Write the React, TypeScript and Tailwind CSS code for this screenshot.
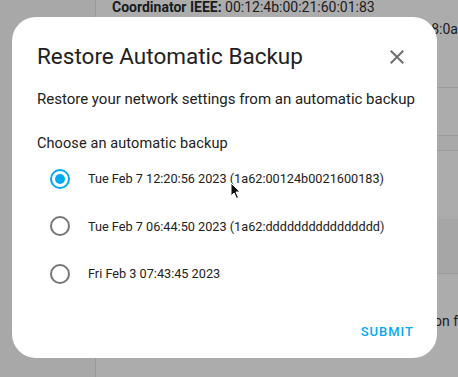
const backups = [
  { label: "Tue Feb 7 12:20:56 2023 (1a62:00124b0021600183)", checked: true },
  { label: "Tue Feb 7 06:44:50 2023 (1a62:dddddddddddddddd)", checked: false },
  { label: "Fri Feb 3 07:43:45 2023", checked: false },
];

function Radio({ checked }: { checked: boolean }) {
  return (
    <span
      className={`flex h-5 w-5 shrink-0 items-center justify-center rounded-full border-2 ${
        checked ? "border-[#03a9f4]" : "border-[#757575]"
      }`}
    >
      {checked && <span className="h-2.5 w-2.5 rounded-full bg-[#03a9f4]" />}
    </span>
  );
}

export default function App() {
  return (
    <div className="relative flex h-[377px] w-[458px] overflow-hidden bg-[#acacac] font-['Roboto',sans-serif]">
      {/* page behind the scrim */}
      <div className="h-full w-[96px] border-r border-[#999999] bg-[#a8a8a8]" />
      <div className="flex flex-1 flex-col">
        <div className="pl-4 text-[14px] leading-[14px] text-[#1b1b1b]">
          <span className="font-bold">Coordinator IEEE:</span> 00:12:4b:00:21:60:01:83
        </div>
        <div className="mt-[7px] text-right text-[14px] leading-[16px] text-[#1b1b1b]">08:0a</div>
        <div className="mt-[50px] h-px bg-[#9c9c9c]" />
        <div className="h-[47px]" />
        <div className="h-4 border-y border-[#9c9c9c] bg-[#a9a9a9]" />
        <div className="h-[68px]" />
        <div className="h-[55px] border-b border-[#9c9c9c] bg-[#a6a6a6]" />
        <div className="mt-[39px] text-right text-[14px] leading-4 text-[#1b1b1b]">on f</div>
      </div>

      {/* dialog */}
      <div className="absolute left-3 top-[17px] flex h-[341px] w-[425px] flex-col rounded-[24px] bg-white">
        <div className="flex items-center justify-between pl-[25px] pr-[28px] pt-[24px]">
          <h2 className="text-[22.5px] leading-[30px] text-[#212121]">Restore Automatic Backup</h2>
          <svg width="24" height="24" viewBox="0 0 24 24" className="mt-[2px]">
            <path
              d="M19 6.41 17.59 5 12 10.59 6.41 5 5 6.41 10.59 12 5 17.59 6.41 19 12 13.41 17.59 19 19 17.59 13.41 12z"
              fill="#6f6f6f"
            />
          </svg>
        </div>
        <p className="mt-[18px] whitespace-nowrap pl-[25px] text-[15px] leading-5 text-[#212121]">
          Restore your network settings from an automatic backup
        </p>
        <p className="mt-[25px] pl-[25px] text-[14.5px] leading-5 tracking-[0.1px] text-[#212121]">
          Choose an automatic backup
        </p>
        <div className="mt-[1px] flex flex-col pl-[38px]">
          {backups.map((b) => (
            <label key={b.label} className="flex h-[47.5px] items-center gap-[18px]">
              <Radio checked={b.checked} />
              <span className="text-[12.7px] text-[#212121]">{b.label}</span>
            </label>
          ))}
        </div>
        <div className="mt-auto flex justify-end pb-[17px] pr-[23px]">
          <button
            type="button"
            className="text-[13px] font-medium uppercase tracking-[1px] text-[#03a9f4]"
          >
            Submit
          </button>
        </div>
        {/* mouse pointer */}
        <svg width="12" height="18" viewBox="0 0 12 18" className="absolute left-[218px] top-[165px]">
          <path d="M1 1 L1 14 L4 11 L6.5 16.5 L8.5 15.5 L6 10 L10 10 Z" fill="#111" stroke="#fff" strokeWidth="1" />
        </svg>
      </div>
    </div>
  );
}
